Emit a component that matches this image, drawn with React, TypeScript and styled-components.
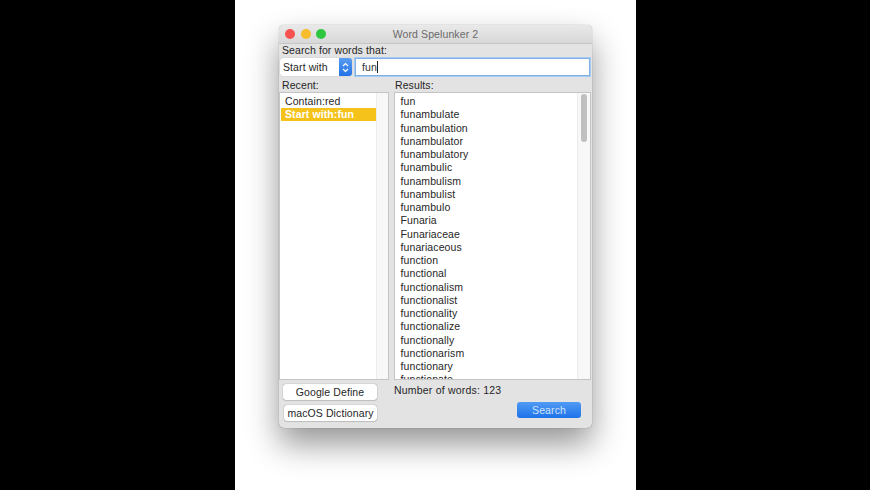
import React from 'react';
import styled, { createGlobalStyle } from 'styled-components';

const GlobalStyle = createGlobalStyle`
  html, body {
    margin: 0;
    padding: 0;
    background: #000;
  }
  body {
    font-family: "Liberation Sans", Arial, sans-serif;
  }
`;

const Page = styled.div`
  width: 870px;
  height: 490px;
  display: flex;
  justify-content: center;
  background: #000;
  overflow: hidden;
  padding-left: 1px;
  box-sizing: border-box;
`;

const Stage = styled.div`
  width: 401px;
  height: 490px;
  background: #fff;
  padding: 25px 0 0 44px;
  box-sizing: border-box;
`;

const Window = styled.div`
  width: 313px;
  height: 403px;
  border-radius: 5px;
  background: #e3e3e3;
  box-shadow: 0 0 1px rgba(0, 0, 0, 0.5), 0 16px 32px rgba(0, 0, 0, 0.42);
  display: flex;
  flex-direction: column;
  color: #262626;
  font-size: 10.5px;
  letter-spacing: 0.1px;
`;

const TitleBar = styled.div`
  height: 17px;
  flex: none;
  position: relative;
  display: flex;
  align-items: center;
  justify-content: center;
  padding-bottom: 1px;
  border-radius: 5px 5px 0 0;
  background: linear-gradient(#e9e9e9, #d8d8d8);
  border-bottom: 1px solid #c6c6c6;
  color: #6a6a6a;
  font-size: 10.5px;
`;

const Lights = styled.div`
  position: absolute;
  left: 6px;
  top: 4px;
  display: flex;
  gap: 5.5px;
`;

const Light = styled.span<{ $color: string }>`
  width: 10px;
  height: 10px;
  border-radius: 50%;
  background: ${(p) => p.$color};
`;

const Heading = styled.div`
  height: 13px;
  line-height: 13px;
`;

const SearchArea = styled.div`
  padding: 0 2px 0 1px;
  display: flex;
  flex-direction: column;
`;

const SearchLabel = styled(Heading)`
  padding-left: 2px;
  margin-bottom: 1px;
`;

const SearchRow = styled.div`
  display: flex;
  gap: 3px;
  height: 18px;
`;

const Select = styled.div`
  width: 72px;
  height: 18px;
  display: flex;
  align-items: center;
  justify-content: space-between;
  background: #fff;
  border-radius: 3px;
  padding-left: 3px;
  box-sizing: border-box;
  box-shadow: 0 0 1px rgba(0, 0, 0, 0.3);
`;

const SelectArrows = styled.span`
  width: 13px;
  height: 18px;
  flex: none;
  display: flex;
  align-items: center;
  justify-content: center;
  border-radius: 0 3px 3px 0;
  background: linear-gradient(#5a9df2, #2273e6);
`;

const SearchInput = styled.div`
  flex: 1;
  height: 16px;
  padding-left: 6px;
  background: #fff;
  border: 1px solid #7fb0e8;
  box-shadow: 0 0 0 1px #a9cbf0;
  display: flex;
  align-items: center;
  color: #333;
`;

const Caret = styled.span`
  width: 1px;
  height: 12px;
  background: #222;
`;

const Columns = styled.div`
  flex: none;
  display: grid;
  grid-template-columns: 110px 197px;
  column-gap: 5px;
  grid-template-rows: 13px 288px;
  padding-top: 2px;
`;

const ColumnLabel = styled(Heading)<{ $inset: number }>`
  padding-left: ${(p) => p.$inset}px;
  margin-top: 1px;
`;

const ListBox = styled.div`
  border: 1px solid #c4c4c4;
  background: #fff;
  display: flex;
  overflow: hidden;
  margin-top: 1px;
  margin-bottom: -1px;
  box-sizing: border-box;
`;

const RecentItems = styled.div`
  flex: 1;
  padding: 2px 0 0 1px;
  min-width: 0;
`;

const RecentRow = styled.div<{ $selected?: boolean }>`
  height: 13px;
  line-height: 13px;
  padding-left: 4px;
  background: ${(p) => (p.$selected ? '#f5c21c' : 'transparent')};
  color: ${(p) => (p.$selected ? '#fff' : '#262626')};
  font-weight: ${(p) => (p.$selected ? 700 : 400)};
`;

const Gutter = styled.div<{ $width: number }>`
  width: ${(p) => p.$width}px;
  flex: none;
  background: #f8f8f8;
  border-left: 1px solid #ececec;
  padding-top: 1px;
  display: flex;
  justify-content: center;
  box-sizing: border-box;
`;

const Thumb = styled.div`
  width: 6px;
  height: 48px;
  border-radius: 3px;
  background: #c0c0c0;
`;

const ResultItems = styled.div`
  flex: 1;
  min-width: 0;
  overflow: hidden;
  padding: 2px 0 0 5.5px;
`;

const ResultRow = styled.div`
  height: 13.25px;
  line-height: 13.25px;
  white-space: nowrap;
`;

const Footer = styled.div`
  display: grid;
  grid-template-columns: 115px 1fr;
  padding-top: 5px;
`;

const FooterButtons = styled.div`
  display: flex;
  flex-direction: column;
  align-items: flex-end;
  gap: 5px;
  padding-right: 17px;
`;

const PlainButton = styled.button<{ $width: number }>`
  width: ${(p) => p.$width}px;
  height: 16px;
  padding: 0;
  border: none;
  border-radius: 3px;
  background: #fff;
  box-shadow: 0 0 1px rgba(0, 0, 0, 0.55), 0 1px 1px rgba(0, 0, 0, 0.12);
  color: #262626;
  font: inherit;
  letter-spacing: inherit;
`;

const FooterRight = styled.div`
  display: flex;
  flex-direction: column;
`;

const WordCount = styled.div`
  line-height: 13px;
  letter-spacing: 0.2px;
`;

const SearchButton = styled.button`
  align-self: flex-end;
  width: 64px;
  height: 16px;
  margin: 5px 11px 0 0;
  padding: 0;
  border: none;
  border-radius: 3px;
  background: linear-gradient(#4f9bf5, #1f72ea);
  color: #cfe2fb;
  font: inherit;
  letter-spacing: inherit;
`;

const words = [
  'fun', 'funambulate', 'funambulation', 'funambulator', 'funambulatory',
  'funambulic', 'funambulism', 'funambulist', 'funambulo', 'Funaria',
  'Funariaceae', 'funariaceous', 'function', 'functional', 'functionalism',
  'functionalist', 'functionality', 'functionalize', 'functionally',
  'functionarism', 'functionary', 'functionate',
];

const App: React.FC = () => {
  return (
    <Page>
      <GlobalStyle />
      <Stage>
        <Window>
          <TitleBar>
            <Lights>
              <Light $color="#f6524f" />
              <Light $color="#f7bd2d" />
              <Light $color="#2fc640" />
            </Lights>
            Word Spelunker 2
          </TitleBar>
          <SearchArea>
            <SearchLabel>Search for words that:</SearchLabel>
            <SearchRow>
              <Select>
                Start with
                <SelectArrows>
                  <svg width="7" height="11" viewBox="0 0 7 11" fill="none" stroke="#fff" strokeWidth="1.2">
                    <path d="M1 4 L3.5 1.5 L6 4" />
                    <path d="M1 7 L3.5 9.5 L6 7" />
                  </svg>
                </SelectArrows>
              </Select>
              <SearchInput>
                fun
                <Caret />
              </SearchInput>
            </SearchRow>
          </SearchArea>
          <Columns>
            <ColumnLabel $inset={3}>Recent:</ColumnLabel>
            <ColumnLabel $inset={1}>Results:</ColumnLabel>
            <ListBox>
              <RecentItems>
                <RecentRow>Contain:red</RecentRow>
                <RecentRow $selected>Start with:fun</RecentRow>
              </RecentItems>
              <Gutter $width={12} />
            </ListBox>
            <ListBox>
              <ResultItems>
                {words.map((word) => (
                  <ResultRow key={word}>{word}</ResultRow>
                ))}
              </ResultItems>
              <Gutter $width={13}>
                <Thumb />
              </Gutter>
            </ListBox>
          </Columns>
          <Footer>
            <FooterButtons>
              <PlainButton $width={94}>Google Define</PlainButton>
              <PlainButton $width={93}>macOS Dictionary</PlainButton>
            </FooterButtons>
            <FooterRight>
              <WordCount>Number of words: 123</WordCount>
              <SearchButton>Search</SearchButton>
            </FooterRight>
          </Footer>
        </Window>
      </Stage>
    </Page>
  );
};

export default App;
